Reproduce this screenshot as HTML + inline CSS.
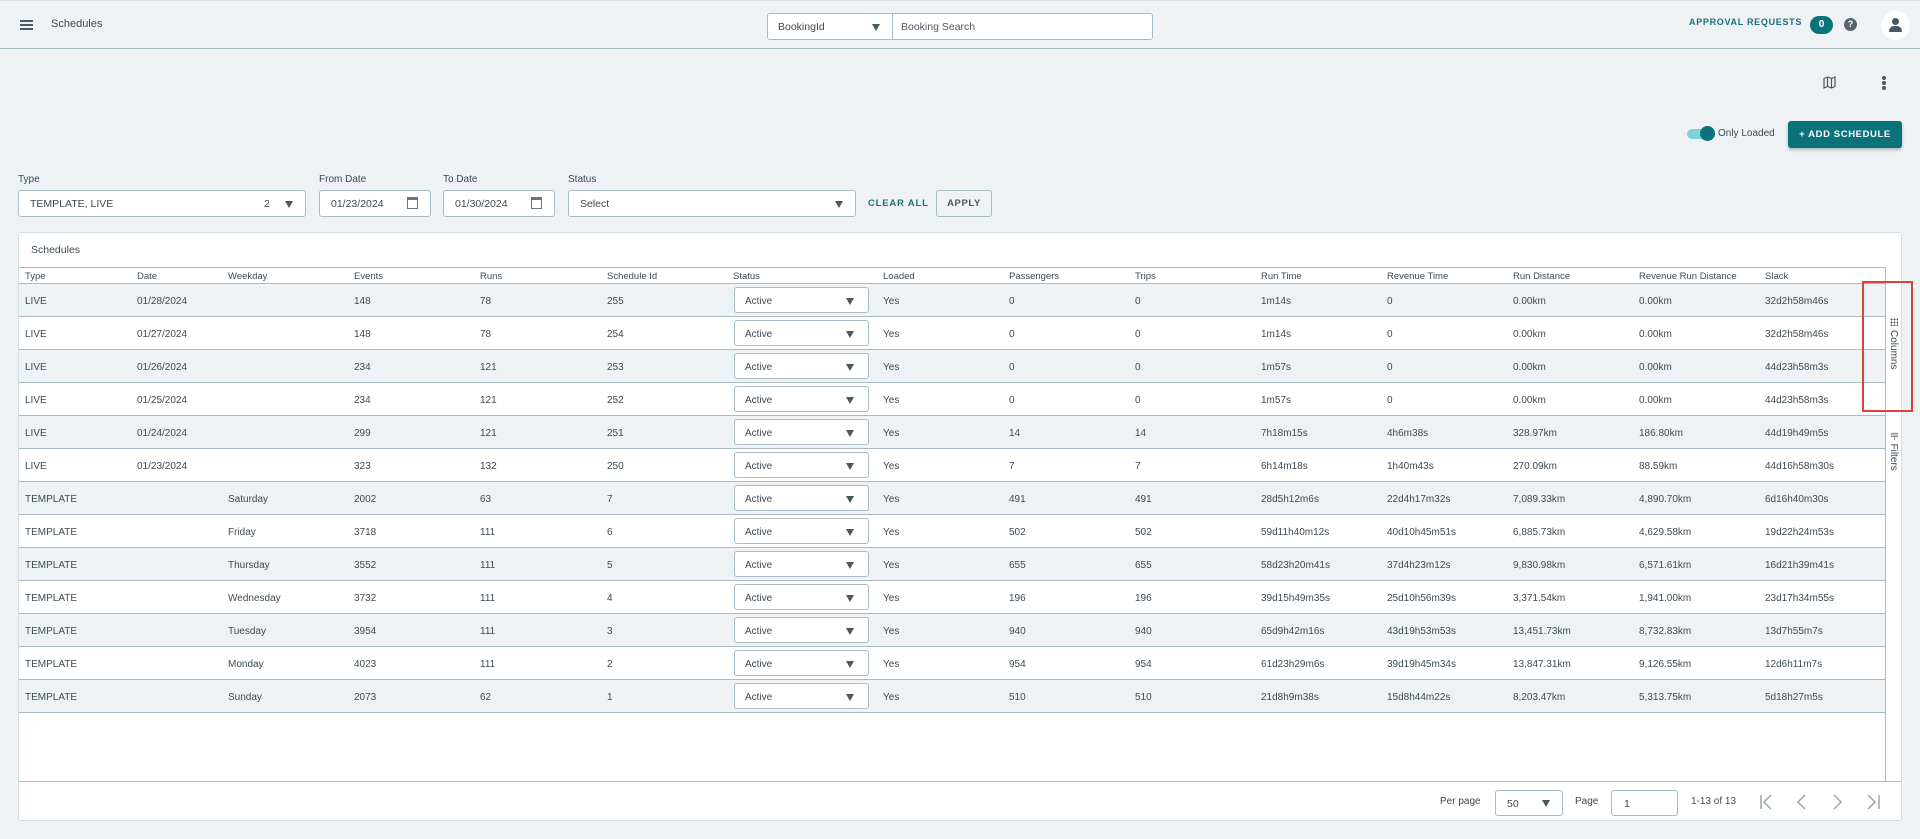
<!DOCTYPE html>
<html><head><meta charset="utf-8"><style>
*{box-sizing:border-box;margin:0;padding:0}
body{width:1920px;height:839px;background:#eef2f5;font-family:"Liberation Sans",sans-serif;color:#3d4a52;font-size:11px;position:relative;overflow:hidden}
.a{position:absolute}
.hdr{left:0;top:0;width:1920px;height:49px;border-bottom:1px solid #a9bcc5;border-top:1px solid #dde3e7}
.box{position:absolute;background:#fff;border:1px solid #a9bcc5;border-radius:3px;font-size:10.5px}
.lbl{position:absolute;font-size:10px;color:#3d4a52}
.tri{position:absolute;width:0;height:0;border-left:4px solid transparent;border-right:4px solid transparent;border-top:7px solid #4a5860}
.card{left:18px;top:232px;width:1884px;height:589px;background:#fff;border:1px solid #d3dde2;border-radius:3px}
.row{position:absolute;left:19px;width:1866px;height:33px;border-bottom:1px solid #a9bcc5}
.row span{position:absolute;top:12px;font-size:10px}
.sel{position:absolute;left:715px;top:3px;width:135px;height:26px;background:#fff;border:1px solid #a9bcc5;border-radius:3px}
.sel b{position:absolute;left:10px;top:8px;font-weight:normal;font-size:10px}
.sel i{position:absolute;right:14px;top:10px;border-left:4px solid transparent;border-right:4px solid transparent;border-top:7px solid #4a5860}
.th span{position:absolute;top:3px;font-size:9.5px}
</style></head><body>
<div class="a hdr"></div>
<div class="a" style="left:20px;top:20px;width:13px;height:2px;background:#4a5860;box-shadow:0 4px 0 #4a5860,0 8px 0 #4a5860"></div>
<div class="a" style="left:51px;top:18px;font-size:11px">Schedules</div>
<div class="box" style="left:767px;top:13px;width:126px;height:27px;border-radius:3px 0 0 3px"><span class="a" style="left:10px;top:7px">BookingId</span><i class="tri" style="left:104px;top:10px"></i></div>
<div class="box" style="left:892px;top:13px;width:261px;height:27px;border-radius:0 3px 3px 0"><span class="a" style="left:8px;top:7px;color:#556">Booking Search</span></div>
<div class="a" style="left:1689px;top:17px;font-size:9px;letter-spacing:.7px;color:#1d6f77;font-weight:bold">APPROVAL REQUESTS</div>
<div class="a" style="left:1810px;top:16px;width:23px;height:18px;border-radius:9px;background:#0a737a;color:#fff;font-size:10px;text-align:center;line-height:18px;font-weight:bold">0</div>
<div class="a" style="left:1844px;top:18px;width:13px;height:13px;border-radius:50%;background:#56646c;color:#fff;font-size:9px;text-align:center;line-height:13px;font-weight:bold">?</div>
<div class="a" style="left:1881px;top:11px;width:29px;height:29px;border-radius:50%;background:#fff"></div>
<div class="a" style="left:1892px;top:18px;width:7px;height:7px;border-radius:50%;background:#4a5860"></div>
<div class="a" style="left:1889px;top:26px;width:13px;height:6px;border-radius:5px 5px 1px 1px;background:#4a5860"></div>
<svg class="a" style="left:1823px;top:76px" width="13" height="13" viewBox="0 0 13 13"><path d="M1 2.5l3.5-1.5 4 1.5 3.5-1.5v9.5l-3.5 1.5-4-1.5-3.5 1.5z M4.5 1v9.5 M8.5 2.5v9.5" fill="none" stroke="#4a5860" stroke-width="1.2"/></svg>
<div class="a" style="left:1882px;top:76px;width:4px;height:4px;border-radius:50%;background:#4a5860;box-shadow:0 5px 0 #4a5860,0 10px 0 #4a5860"></div>
<div class="a" style="left:1687px;top:129px;width:24px;height:10px;border-radius:5px;background:#7dd3d3"></div>
<div class="a" style="left:1700px;top:126px;width:15px;height:15px;border-radius:50%;background:#0a737a"></div>
<div class="a" style="left:1718px;top:128px;font-size:10px">Only Loaded</div>
<div class="a" style="left:1788px;top:121px;width:114px;height:27px;background:#0a737a;border-radius:3px;color:#fff;font-size:9.5px;font-weight:bold;letter-spacing:.6px;text-align:center;line-height:27px;box-shadow:0 2px 3px rgba(0,0,0,.25)">+ ADD SCHEDULE</div>

<div class="lbl" style="left:18px;top:174px">Type</div>
<div class="lbl" style="left:319px;top:174px">From Date</div>
<div class="lbl" style="left:443px;top:174px">To Date</div>
<div class="lbl" style="left:568px;top:174px">Status</div>
<div class="box" style="left:18px;top:190px;width:288px;height:27px"><span class="a" style="left:11px;top:7px">TEMPLATE, LIVE</span><span class="a" style="left:245px;top:7px">2</span><i class="tri" style="left:266px;top:10px"></i></div>
<div class="box" style="left:319px;top:190px;width:112px;height:27px"><span class="a" style="left:11px;top:7px">01/23/2024</span><span class="a" style="left:87px;top:6px;width:11px;height:12px;border:1px solid #6a767d;border-top:3px solid #6a767d"></span></div>
<div class="box" style="left:443px;top:190px;width:112px;height:27px"><span class="a" style="left:11px;top:7px">01/30/2024</span><span class="a" style="left:87px;top:6px;width:11px;height:12px;border:1px solid #6a767d;border-top:3px solid #6a767d"></span></div>
<div class="box" style="left:568px;top:190px;width:288px;height:27px"><span class="a" style="left:11px;top:7px">Select</span><i class="tri" style="left:266px;top:10px"></i></div>
<div class="a" style="left:868px;top:198px;font-size:9.5px;font-weight:bold;letter-spacing:.8px;color:#1d6f77">CLEAR ALL</div>
<div class="a" style="left:936px;top:190px;width:56px;height:27px;border:1px solid #a9bcc5;border-radius:3px;font-size:9.5px;font-weight:bold;letter-spacing:.6px;text-align:center;line-height:25px;color:#4a5860">APPLY</div>

<div class="a card"></div>
<div class="a" style="left:31px;top:244px;font-size:10.5px">Schedules</div>
<div class="a" style="left:19px;top:267px;width:1866px;height:1px;background:#a9bcc5"></div>
<div class="a" style="left:1885px;top:267px;width:1px;height:514px;background:#a9bcc5"></div>
<div class="row th" style="top:268px;height:16px">
<span style="left:6px">Type</span><span style="left:118px">Date</span><span style="left:209px">Weekday</span><span style="left:335px">Events</span><span style="left:461px">Runs</span><span style="left:588px">Schedule Id</span><span style="left:714px">Status</span><span style="left:864px">Loaded</span><span style="left:990px">Passengers</span><span style="left:1116px">Trips</span><span style="left:1242px">Run Time</span><span style="left:1368px">Revenue Time</span><span style="left:1494px">Run Distance</span><span style="left:1620px">Revenue Run Distance</span><span style="left:1746px">Slack</span></div>

<div class="row" style="top:284px;background:#eef2f5"><span style="left:6px">LIVE</span><span style="left:118px">01/28/2024</span><span style="left:335px">148</span><span style="left:461px">78</span><span style="left:588px">255</span><div class="sel"><b>Active</b><i></i></div><span style="left:864px">Yes</span><span style="left:990px">0</span><span style="left:1116px">0</span><span style="left:1242px">1m14s</span><span style="left:1368px">0</span><span style="left:1494px">0.00km</span><span style="left:1620px">0.00km</span><span style="left:1746px">32d2h58m46s</span></div>
<div class="row" style="top:317px"><span style="left:6px">LIVE</span><span style="left:118px">01/27/2024</span><span style="left:335px">148</span><span style="left:461px">78</span><span style="left:588px">254</span><div class="sel"><b>Active</b><i></i></div><span style="left:864px">Yes</span><span style="left:990px">0</span><span style="left:1116px">0</span><span style="left:1242px">1m14s</span><span style="left:1368px">0</span><span style="left:1494px">0.00km</span><span style="left:1620px">0.00km</span><span style="left:1746px">32d2h58m46s</span></div>
<div class="row" style="top:350px;background:#eef2f5"><span style="left:6px">LIVE</span><span style="left:118px">01/26/2024</span><span style="left:335px">234</span><span style="left:461px">121</span><span style="left:588px">253</span><div class="sel"><b>Active</b><i></i></div><span style="left:864px">Yes</span><span style="left:990px">0</span><span style="left:1116px">0</span><span style="left:1242px">1m57s</span><span style="left:1368px">0</span><span style="left:1494px">0.00km</span><span style="left:1620px">0.00km</span><span style="left:1746px">44d23h58m3s</span></div>
<div class="row" style="top:383px"><span style="left:6px">LIVE</span><span style="left:118px">01/25/2024</span><span style="left:335px">234</span><span style="left:461px">121</span><span style="left:588px">252</span><div class="sel"><b>Active</b><i></i></div><span style="left:864px">Yes</span><span style="left:990px">0</span><span style="left:1116px">0</span><span style="left:1242px">1m57s</span><span style="left:1368px">0</span><span style="left:1494px">0.00km</span><span style="left:1620px">0.00km</span><span style="left:1746px">44d23h58m3s</span></div>
<div class="row" style="top:416px;background:#eef2f5"><span style="left:6px">LIVE</span><span style="left:118px">01/24/2024</span><span style="left:335px">299</span><span style="left:461px">121</span><span style="left:588px">251</span><div class="sel"><b>Active</b><i></i></div><span style="left:864px">Yes</span><span style="left:990px">14</span><span style="left:1116px">14</span><span style="left:1242px">7h18m15s</span><span style="left:1368px">4h6m38s</span><span style="left:1494px">328.97km</span><span style="left:1620px">186.80km</span><span style="left:1746px">44d19h49m5s</span></div>
<div class="row" style="top:449px"><span style="left:6px">LIVE</span><span style="left:118px">01/23/2024</span><span style="left:335px">323</span><span style="left:461px">132</span><span style="left:588px">250</span><div class="sel"><b>Active</b><i></i></div><span style="left:864px">Yes</span><span style="left:990px">7</span><span style="left:1116px">7</span><span style="left:1242px">6h14m18s</span><span style="left:1368px">1h40m43s</span><span style="left:1494px">270.09km</span><span style="left:1620px">88.59km</span><span style="left:1746px">44d16h58m30s</span></div>
<div class="row" style="top:482px;background:#eef2f5"><span style="left:6px">TEMPLATE</span><span style="left:209px">Saturday</span><span style="left:335px">2002</span><span style="left:461px">63</span><span style="left:588px">7</span><div class="sel"><b>Active</b><i></i></div><span style="left:864px">Yes</span><span style="left:990px">491</span><span style="left:1116px">491</span><span style="left:1242px">28d5h12m6s</span><span style="left:1368px">22d4h17m32s</span><span style="left:1494px">7,089.33km</span><span style="left:1620px">4,890.70km</span><span style="left:1746px">6d16h40m30s</span></div>
<div class="row" style="top:515px"><span style="left:6px">TEMPLATE</span><span style="left:209px">Friday</span><span style="left:335px">3718</span><span style="left:461px">111</span><span style="left:588px">6</span><div class="sel"><b>Active</b><i></i></div><span style="left:864px">Yes</span><span style="left:990px">502</span><span style="left:1116px">502</span><span style="left:1242px">59d11h40m12s</span><span style="left:1368px">40d10h45m51s</span><span style="left:1494px">6,885.73km</span><span style="left:1620px">4,629.58km</span><span style="left:1746px">19d22h24m53s</span></div>
<div class="row" style="top:548px;background:#eef2f5"><span style="left:6px">TEMPLATE</span><span style="left:209px">Thursday</span><span style="left:335px">3552</span><span style="left:461px">111</span><span style="left:588px">5</span><div class="sel"><b>Active</b><i></i></div><span style="left:864px">Yes</span><span style="left:990px">655</span><span style="left:1116px">655</span><span style="left:1242px">58d23h20m41s</span><span style="left:1368px">37d4h23m12s</span><span style="left:1494px">9,830.98km</span><span style="left:1620px">6,571.61km</span><span style="left:1746px">16d21h39m41s</span></div>
<div class="row" style="top:581px"><span style="left:6px">TEMPLATE</span><span style="left:209px">Wednesday</span><span style="left:335px">3732</span><span style="left:461px">111</span><span style="left:588px">4</span><div class="sel"><b>Active</b><i></i></div><span style="left:864px">Yes</span><span style="left:990px">196</span><span style="left:1116px">196</span><span style="left:1242px">39d15h49m35s</span><span style="left:1368px">25d10h56m39s</span><span style="left:1494px">3,371.54km</span><span style="left:1620px">1,941.00km</span><span style="left:1746px">23d17h34m55s</span></div>
<div class="row" style="top:614px;background:#eef2f5"><span style="left:6px">TEMPLATE</span><span style="left:209px">Tuesday</span><span style="left:335px">3954</span><span style="left:461px">111</span><span style="left:588px">3</span><div class="sel"><b>Active</b><i></i></div><span style="left:864px">Yes</span><span style="left:990px">940</span><span style="left:1116px">940</span><span style="left:1242px">65d9h42m16s</span><span style="left:1368px">43d19h53m53s</span><span style="left:1494px">13,451.73km</span><span style="left:1620px">8,732.83km</span><span style="left:1746px">13d7h55m7s</span></div>
<div class="row" style="top:647px"><span style="left:6px">TEMPLATE</span><span style="left:209px">Monday</span><span style="left:335px">4023</span><span style="left:461px">111</span><span style="left:588px">2</span><div class="sel"><b>Active</b><i></i></div><span style="left:864px">Yes</span><span style="left:990px">954</span><span style="left:1116px">954</span><span style="left:1242px">61d23h29m6s</span><span style="left:1368px">39d19h45m34s</span><span style="left:1494px">13,847.31km</span><span style="left:1620px">9,126.55km</span><span style="left:1746px">12d6h11m7s</span></div>
<div class="row" style="top:680px;background:#eef2f5"><span style="left:6px">TEMPLATE</span><span style="left:209px">Sunday</span><span style="left:335px">2073</span><span style="left:461px">62</span><span style="left:588px">1</span><div class="sel"><b>Active</b><i></i></div><span style="left:864px">Yes</span><span style="left:990px">510</span><span style="left:1116px">510</span><span style="left:1242px">21d8h9m38s</span><span style="left:1368px">15d8h44m22s</span><span style="left:1494px">8,203.47km</span><span style="left:1620px">5,313.75km</span><span style="left:1746px">5d18h27m5s</span></div>

<div class="a" style="left:1890px;top:318px;width:8px;height:8px;background:radial-gradient(circle,#4a5860 45%,transparent 50%) 0 0/3px 3px"></div>
<div class="a" style="left:1888px;top:330px;font-size:10px;writing-mode:vertical-rl">Columns</div>
<div class="a" style="left:1888px;top:432px;font-size:10px;writing-mode:vertical-rl">⊪ Filters</div>
<div class="a" style="left:1862px;top:281px;width:51px;height:131px;border:2px solid #e0403a"></div>

<div class="a" style="left:19px;top:781px;width:1882px;height:1px;background:#a9bcc5"></div>
<div class="a" style="left:1440px;top:796px;font-size:10px">Per page</div>
<div class="box" style="left:1495px;top:790px;width:68px;height:26px"><span class="a" style="left:11px;top:7px">50</span><i class="tri" style="left:46px;top:9px"></i></div>
<div class="a" style="left:1575px;top:796px;font-size:10px">Page</div>
<div class="box" style="left:1611px;top:790px;width:67px;height:26px"><span class="a" style="left:12px;top:7px">1</span></div>
<div class="a" style="left:1691px;top:796px;font-size:10px">1-13 of 13</div>
<svg class="a" style="left:1758px;top:794px" width="130" height="16" viewBox="0 0 130 16"><g fill="none" stroke="#9aa6ad" stroke-width="1.5"><path d="M3 1v14 M13 1l-7 7 7 7"/><path d="M47 1l-7 7 7 7"/><path d="M76 1l7 7-7 7"/><path d="M110 1l7 7-7 7 M121 1v14"/></g></svg>
</body></html>
